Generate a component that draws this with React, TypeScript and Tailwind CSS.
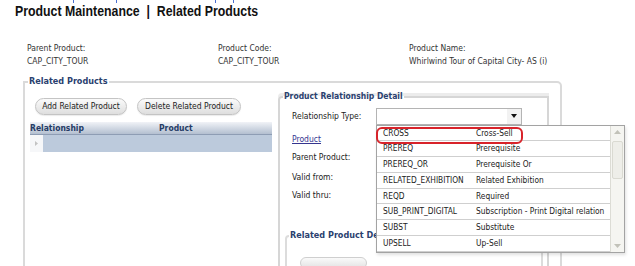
import React from 'react';

const ui = "font-['DejaVu_Sans_Condensed','Liberation_Sans',Arial,sans-serif]";

const options: [string, string][] = [
  ['CROSS', 'Cross-Sell'],
  ['PREREQ', 'Prerequisite'],
  ['PREREQ_OR', 'Prerequisite Or'],
  ['RELATED_EXHIBITION', 'Related Exhibition'],
  ['REQD', 'Required'],
  ['SUB_PRINT_DIGITAL', 'Subscription - Print Digital relation'],
  ['SUBST', 'Substitute'],
  ['UPSELL', 'Up-Sell'],
];

const info = [
  { label: 'Parent Product:', value: 'CAP_CITY_TOUR' },
  { label: 'Product Code:', value: 'CAP_CITY_TOUR' },
  { label: 'Product Name:', value: 'Whirlwind Tour of Capital City- AS (i)' },
];

const PillButton = ({ children, w }: { children: React.ReactNode; w: string }) => (
  <button
    className={`${w} h-[17px] rounded-full border border-[#c4c4c4] bg-gradient-to-b from-[#fbfbfb] to-[#dedede] text-[8.5px] leading-none text-[#222] shadow-[0_1px_1px_rgba(0,0,0,0.08)]`}
  >
    {children}
  </button>
);

const Arrow = ({ up }: { up?: boolean }) => (
  <svg width="7" height="4" viewBox="0 0 7 4" className={up ? 'rotate-180' : ''}>
    <path d="M0 0h7L3.5 4z" fill="#c2c2b9" />
  </svg>
);

const DetailRow = ({ children, className = '' }: { children: React.ReactNode; className?: string }) => (
  <div className={`flex h-[18px] items-center ${className}`}>{children}</div>
);

export default function App() {
  return (
    <div className={`relative h-[266px] w-[635px] overflow-hidden bg-white text-[#222] ${ui}`}>
      {/* clipped breadcrumb links above the title */}
      <div className="flex h-[3px] overflow-hidden">
        <span className="ml-[73px] h-[3px] w-px bg-[#4a6fd0]" />
        <span className="ml-[42px] h-[3px] w-px bg-[#4a6fd0]" />
        <span className="ml-[98px] h-[3px] w-px bg-[#4a6fd0]" />
        <span className="ml-[17px] h-[3px] w-px bg-[#4a6fd0]" />
      </div>

      <h1 className="ml-[15px] w-max origin-left scale-x-[0.85] whitespace-nowrap font-['Liberation_Sans',Arial,sans-serif] text-[14.5px] font-bold leading-[16px] text-[#111]">
        Product Maintenance&nbsp; |&nbsp; Related Products
      </h1>

      <div className="mt-[23px] grid grid-cols-[191px_191px_1fr] pl-[27px] text-[8.5px] leading-[13px] text-[#333]">
        {info.map((f) => (
          <div key={f.label}>
            <div>{f.label}</div>
            <div>{f.value}</div>
          </div>
        ))}
      </div>

      <fieldset className="ml-[23px] mt-[8px] h-[200px] w-[539px] rounded-tr-[5px] border-2 border-[#dadada]">
        <legend className="ml-[3px] px-[1px] text-[9px] font-bold leading-[11px] text-[#2a416f]">Related Products</legend>

        <div className="flex pl-[5px]">
          {/* related product list */}
          <div className="w-[242px] pt-[11px]">
            <div className="flex gap-[10px] pl-[5px]">
              <PillButton w="w-[92px]">Add Related Product</PillButton>
              <PillButton w="w-[104px]">Delete Related Product</PillButton>
            </div>
            <div className="mt-[7px] flex h-[13px] items-center border-b border-[#8e9db4] bg-gradient-to-b from-[#f1f3f7] to-[#b3bfd0] text-[8.5px] font-bold text-[#253b66]">
              <span className="w-[129px]">Relationship</span>
              <span>Product</span>
            </div>
            <div className="flex h-[17px]">
              <div className="flex w-[13px] items-center justify-center bg-[#f6f7f9]">
                <svg width="3" height="5" viewBox="0 0 3 5">
                  <path d="M0 0l3 2.5L0 5z" fill="#c3c3c3" />
                </svg>
              </div>
              <div className="flex-1 bg-[#bccadc]" />
            </div>
          </div>

          {/* detail panel */}
          <fieldset className="ml-[6px] mt-[4px] h-[190px] w-[271px] rounded-tl-[4px] border-2 border-[#d6d6d6] shadow-[0_-3px_0_#ececec]">
            <legend className="ml-[3px] px-[1px] text-[8.5px] font-bold leading-[11px] text-[#2a416f]">
              Product Relationship Detail
            </legend>
            <div className="pl-[12px] text-[8.5px] text-[#222]">
              <DetailRow className="mt-[5px]">
                <span className="w-[84px]">Relationship Type:</span>
                <div className="relative flex h-[17px] w-[146px] items-center justify-end border border-[#b4b4b4] bg-white">
                  <div className="flex h-full w-[14px] items-center justify-center bg-[#f2f2f2]">
                    <svg width="6" height="4" viewBox="0 0 6 4">
                      <path d="M0 0h6L3 4z" fill="#111" />
                    </svg>
                  </div>

                  {/* open list of relationship types */}
                  <div className="absolute left-[-1px] top-[16px] z-10 flex w-[249px] border border-[#a3a3a3] bg-white shadow-[1px_2px_3px_rgba(0,0,0,0.12)]">
                    <ul className="w-[234px]">
                      {options.map(([code, desc], i) => (
                        <li
                          key={code}
                          className="relative flex h-[15.75px] items-center border-b border-[#cfcfcf] pl-[6px] text-[8.3px] text-[#222]"
                        >
                          <span className="w-[93px]">{code}</span>
                          <span>{desc}</span>
                          {i === 0 && (
                            <span className="absolute left-[-1px] top-[1px] h-[17px] w-[147px] rounded-[6px] border-2 border-[#d8232a]" />
                          )}
                        </li>
                      ))}
                    </ul>
                    <div className="flex w-[14px] flex-col items-center border-l border-[#dcdcd5] bg-[#f5f5f1]">
                      <div className="flex h-[12px] items-center">
                        <Arrow up />
                      </div>
                      <div className="mt-[3px] h-[38px] w-[11px] rounded-[2px] border border-[#dadad2] bg-[#eeeee9]" />
                      <div className="flex-1" />
                      <div className="flex h-[12px] items-center">
                        <Arrow />
                      </div>
                    </div>
                  </div>
                </div>
              </DetailRow>
              <DetailRow className="mt-[5px]">
                <a className="text-[#35358f] underline">Product</a>
              </DetailRow>
              <DetailRow>Parent Product:</DetailRow>
              <DetailRow className="mt-[2px]">Valid from:</DetailRow>
              <DetailRow>Valid thru:</DetailRow>
            </div>

            <fieldset className="ml-[5px] mt-[26px] h-[60px] w-[258px] rounded-tl-[4px] border-2 border-[#dcdcdc]">
              <legend className="ml-[2px] whitespace-nowrap px-[1px] text-[9px] font-bold leading-[11px] text-[#2a416f]">
                Related Product De
              </legend>
              <div className="ml-[13px] mt-[16px] h-[12px] w-[67px] rounded-full border border-[#cfcfcf] bg-gradient-to-b from-[#fafafa] to-[#e2e2e2]" />
            </fieldset>
          </fieldset>
        </div>
      </fieldset>
    </div>
  );
}
